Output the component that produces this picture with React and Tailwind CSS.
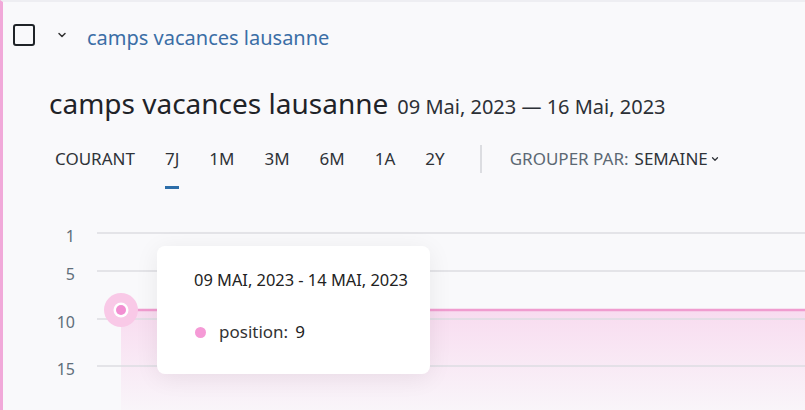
import { ChevronDown } from 'lucide-react';

const ranges = ['COURANT', '7J', '1M', '3M', '6M', '1A', '2Y'];

function Chart() {
  const ticks = [
    { label: '1', y: 33 },
    { label: '5', y: 71 },
    { label: '10', y: 119 },
    { label: '15', y: 166 },
  ];
  return (
    <div className="relative h-[210px] w-full">
      <svg className="absolute inset-0 h-full w-full" viewBox="0 0 802 210" preserveAspectRatio="none">
        <defs>
          <linearGradient id="area" x1="0" y1="0" x2="0" y2="1">
            <stop offset="0%" stopColor="#f7b8e2" stopOpacity="0.45" />
            <stop offset="100%" stopColor="#f7b8e2" stopOpacity="0.06" />
          </linearGradient>
        </defs>
        <rect x="118" y="110" width="684" height="100" fill="url(#area)" />
        {ticks.map((t) => (
          <g key={t.label}>
            <line x1="94" x2="802" y1={t.y} y2={t.y} stroke="#dcdce2" strokeWidth="1.5" />
            <text
              x="72"
              y={t.y + 9}
              textAnchor="end"
              fontSize="16"
              fill="#5f6e7a"
              fontFamily="'Noto Sans', sans-serif"
            >
              {t.label}
            </text>
          </g>
        ))}
        <line x1="118" x2="802" y1="110" y2="110" stroke="#f09ccf" strokeWidth="2.5" />
        <circle cx="118" cy="110" r="17" fill="#f9c9e7" />
        <circle cx="118" cy="110" r="7.5" fill="#ffffff" />
        <circle cx="118" cy="110" r="5" fill="#f28fd2" />
      </svg>
      <div className="absolute left-[154px] top-[46px] h-[128px] w-[273px] rounded-lg bg-white pl-[37px] pt-[22px] shadow-[0_4px_24px_rgba(0,0,0,0.07)]">
        <div className="text-[16.4px] leading-[24px] text-[#222]">09 MAI, 2023 - 14 MAI, 2023</div>
        <div className="mt-[27px] flex items-center text-[17px] leading-[26px] text-[#333]">
          <span className="ml-[1px] mr-[13px] h-[11px] w-[11px] rounded-full bg-[#f59ad6]" />
          <span>position:</span>
          <span className="ml-[7px] text-[#222]">9</span>
        </div>
      </div>
    </div>
  );
}

export default function App() {
  return (
    <div
      className="h-[410px] w-full overflow-hidden border-l-[3px] border-t-2 border-l-[#f1a9d9] border-t-[#eeeef2] bg-[#f9f9fb]"
      style={{ fontFamily: "'Noto Sans', sans-serif" }}
    >
      <div className="flex h-[43px] items-center pl-[10px] pt-[23px]">
        <div className="h-[22px] w-[22px] rounded-[3px] border-2 border-[#1f2328]" />
        <ChevronDown className="ml-[21px] h-[12px] w-[12px] text-[#333]" strokeWidth={3} />
        <span className="ml-[19px] pt-[6px] text-[20px] leading-[28px] text-[#3b6ea6]">camps vacances lausanne</span>
      </div>

      <div className="mt-[37px] flex items-baseline pl-[46px]">
        <h1 className="text-[28px] leading-[42px] text-[#1f2328]">camps vacances lausanne</h1>
        <span className="ml-[9px] text-[20px] text-[#2c3036]">09 Mai, 2023 — 16 Mai, 2023</span>
      </div>

      <div className="mt-[24px] flex items-start pl-[52px]">
        {ranges.map((r) => (
          <div key={r} className="mr-[30px] flex flex-col items-center">
            <span className="text-[17px] leading-[22px] text-[#2f3338]">{r}</span>
            {r === '7J' && <span className="mt-[16px] h-[3px] w-[14px] bg-[#2d6ea9]" />}
          </div>
        ))}
        <div className="ml-[5px] mt-[-3px] h-[28px] w-[2px] bg-[#dcdde1]" />
        <div className="ml-[28px] flex items-center text-[17px] leading-[22px]">
          <span className="text-[#5c6873]">GROUPER PAR:</span>
          <span className="ml-[6px] text-[#2f3338]">SEMAINE</span>
          <ChevronDown className="ml-[2px] h-[10px] w-[10px] text-[#2f3338]" strokeWidth={3} />
        </div>
      </div>

      <div className="mt-[11px]">
        <Chart />
      </div>
    </div>
  );
}
